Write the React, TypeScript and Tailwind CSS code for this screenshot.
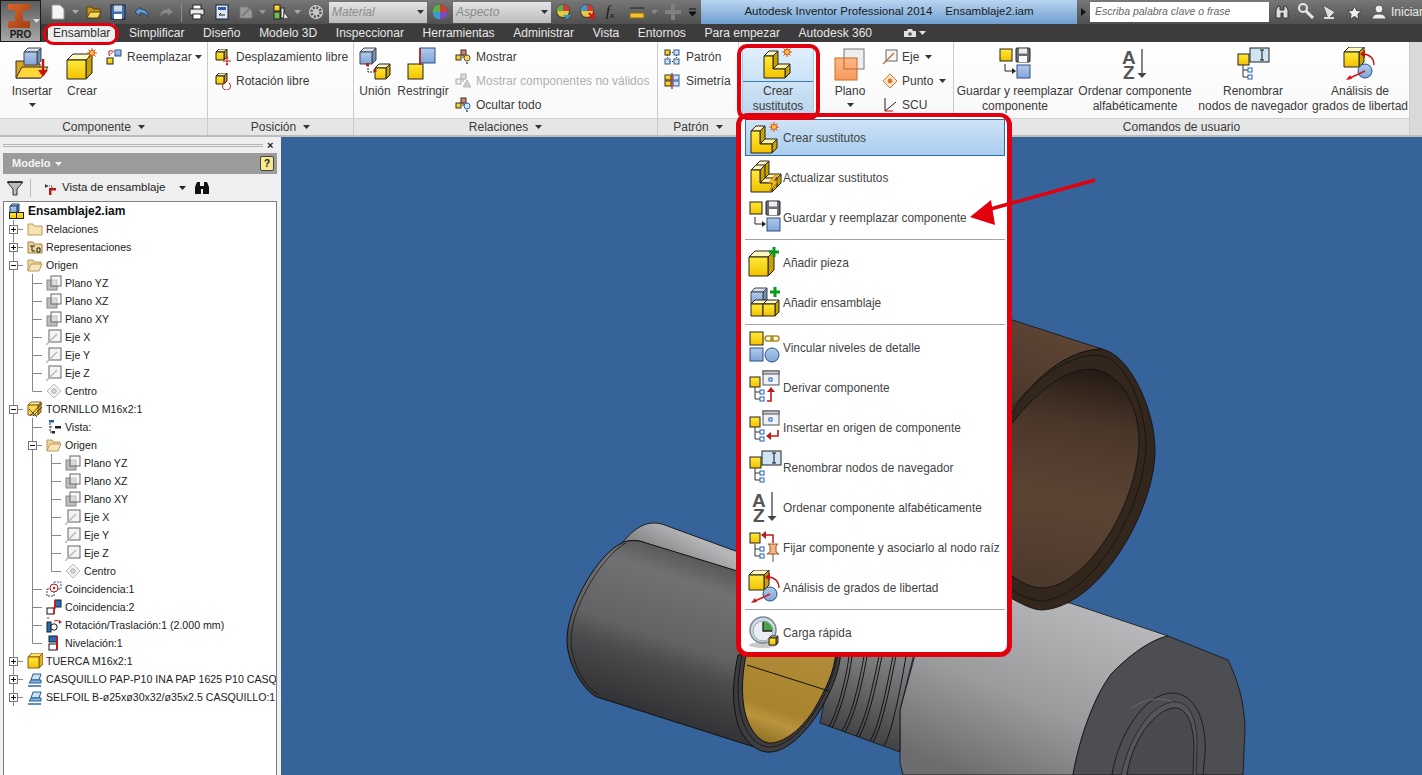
import type { ReactNode } from "react";

const Y = "url(#yel)";
const B = "url(#blu)";

type SvgProps = { size?: number; w?: number; h?: number; vb?: string; className?: string; children?: ReactNode };

function Svg({ size = 16, w, h, vb, className, children }: SvgProps) {
  const wd = w ?? size;
  const ht = h ?? size;
  return (
    <svg width={wd} height={ht} viewBox={vb ?? `0 0 ${wd} ${ht}`} className={"shrink-0 " + (className ?? "")}>
      {children}
    </svg>
  );
}

function Caret({ className, color = "#333" }: { className?: string; color?: string }) {
  return (
    <svg width="7" height="4" viewBox="0 0 7 4" className={"shrink-0 " + (className ?? "")}>
      <path d="M0 0h7L3.5 4z" fill={color} />
    </svg>
  );
}

// --- piezas de dibujo compartidas ---
function CubeG({ x, y, s, fill = Y, top = "#fff6c0", side = "#c9a200", line = "#222" }: { x: number; y: number; s: number; fill?: string; top?: string; side?: string; line?: string }) {
  const d = Math.round(s * 0.32);
  return (
    <g stroke={line} strokeWidth="1" strokeLinejoin="round">
      <polygon points={`${x},${y} ${x + d},${y - d} ${x + s + d},${y - d} ${x + s},${y}`} fill={top} />
      <polygon points={`${x + s},${y} ${x + s + d},${y - d} ${x + s + d},${y + s - d} ${x + s},${y + s}`} fill={side} />
      <rect x={x} y={y} width={s} height={s} fill={fill} />
    </g>
  );
}

function Spark({ x, y }: { x: number; y: number }) {
  return (
    <g stroke="#d8551a" strokeWidth="1">
      <path d={`M${x - 5} ${y}h10M${x} ${y - 5}v10M${x - 3.5} ${y - 3.5}l7 7M${x + 3.5} ${y - 3.5}l-7 7`} />
      <circle cx={x} cy={y} r="2.6" fill="#ffc23a" />
    </g>
  );
}

function Plus({ x, y }: { x: number; y: number }) {
  return <path d={`M${x - 5} ${y}h10M${x} ${y - 5}v10`} stroke="#0a9a1e" strokeWidth="3" />;
}

function LBlockG({ dx = 0, dy = 0 }: { dx?: number; dy?: number }) {
  return (
    <g transform={`translate(${dx} ${dy})`} stroke="#222" strokeWidth="1" strokeLinejoin="round">
      <polygon points="3,8 8,3 17,3 12,8" fill="#fff6c0" />
      <polygon points="12,8 17,3 17,16 12,21" fill="#c9a200" />
      <polygon points="12,21 17,16 29,16 24,21" fill="#fff0a0" />
      <polygon points="24,21 29,16 29,25 24,30" fill="#c9a200" />
      <path d="M3 8H12V21H24V30H3z" fill={Y} />
    </g>
  );
}

function YSq({ x, y, s = 12 }: { x: number; y: number; s?: number }) {
  return <rect x={x} y={y} width={s} height={s} fill={Y} stroke="#222" />;
}

function BSq({ x, y, s = 12 }: { x: number; y: number; s?: number }) {
  return <rect x={x} y={y} width={s} height={s} fill={B} stroke="#2a4f86" />;
}

function TreeG({ x, y }: { x: number; y: number }) {
  return (
    <g fill="#fff">
      <path d={`M${x} ${y}v12M${x} ${y + 5}h5M${x} ${y + 12}h5`} stroke="#333" fill="none" />
      <rect x={x + 5} y={y + 3} width="4" height="4" stroke="#1a5fb4" />
      <rect x={x + 5} y={y + 10} width="4" height="4" stroke="#1a5fb4" />
    </g>
  );
}

function WindowG({ x, y, children }: { x: number; y: number; children?: ReactNode }) {
  return (
    <g>
      <rect x={x} y={y} width="16" height="14" fill="#eef1f5" stroke="#555" />
      <rect x={x} y={y} width="16" height="3" fill="#c9ccd2" stroke="#555" />
      {children}
    </g>
  );
}

// --- iconos grandes ---
const IcoSustitutos = ({ className }: { className?: string }) => (
  <Svg size={34} className={className}>
    <LBlockG dy={2} />
    <Spark x={26} y={6} />
  </Svg>
);

const IcoActualizar = () => (
  <Svg size={34}>
    <LBlockG dx={4} dy={-2} />
    <LBlockG dy={2} />
    <path d="M28 14l-7 9h4l-4 9 9-11h-4l4-7z" fill="#f7c31f" stroke="#a8741a" strokeWidth=".8" />
  </Svg>
);

const IcoGuardar = () => (
  <Svg size={34}>
    <rect x="2" y="2" width="12" height="12" fill={Y} stroke="#222" />
    <rect x="18" y="1" width="14" height="14" rx="1" fill="#6b6f76" stroke="#222" />
    <rect x="21" y="1.5" width="8" height="5" fill="#eee" />
    <rect x="21" y="9" width="8" height="6" fill="#fff" />
    <path d="M7 17v7h7" stroke="#222" fill="none" />
    <path d="M14 21l4 3-4 3z" fill="#222" />
    <rect x="19" y="18" width="13" height="13" fill={B} stroke="#2a4f86" />
  </Svg>
);

const IcoPieza = () => (
  <Svg size={34}>
    <CubeG x={1} y={12} s={19} />
    <Plus x={26} y={7} />
  </Svg>
);

const IcoEnsamblaje = () => (
  <Svg size={34}>
    <CubeG x={3} y={7} s={12} fill={B} top="#d6e4f5" side="#6e8fbd" line="#444" />
    <CubeG x={3} y={19} s={12} />
    <CubeG x={15} y={19} s={12} />
    <Plus x={27} y={7} />
  </Svg>
);

const IcoVincular = () => (
  <Svg size={34}>
    <YSq x={2} y={2} s={13} />
    <BSq x={2} y={18} s={13} />
    <circle cx="24" cy="25" r="7" fill={B} stroke="#2a4f86" />
    <rect x="17" y="6" width="8" height="5" rx="2.5" fill="none" stroke="#b08a10" strokeWidth="1.5" />
    <rect x="23" y="6" width="8" height="5" rx="2.5" fill="none" stroke="#b08a10" strokeWidth="1.5" />
  </Svg>
);

const IcoDerivar = () => (
  <Svg size={34}>
    <YSq x={2} y={7} s={10} />
    <WindowG x={15} y={1}>
      <rect x="21" y="8" width="3" height="3" fill="none" stroke="#1a5fb4" />
    </WindowG>
    <TreeG x={7} y={17} />
    <path d="M19 31h4V21" stroke="#c01818" strokeWidth="1.6" fill="none" />
    <path d="M19 22l4-5 4 5z" fill="#c01818" />
  </Svg>
);

const IcoInsertar = () => (
  <Svg size={34}>
    <YSq x={2} y={7} s={10} />
    <WindowG x={15} y={1}>
      <rect x="21" y="8" width="3" height="3" fill="none" stroke="#1a5fb4" />
    </WindowG>
    <TreeG x={7} y={17} />
    <path d="M30 20v6h-9" stroke="#c01818" strokeWidth="1.6" fill="none" />
    <path d="M23 22l-5 4 5 4z" fill="#c01818" />
  </Svg>
);

const IcoRenombrar = () => (
  <Svg size={34}>
    <YSq x={2} y={7} s={11} />
    <rect x="14" y="1" width="19" height="14" fill="#cfe4f5" stroke="#222" />
    <path d="M24 3h4M26 3v10M24 13h4" stroke="#111" />
    <TreeG x={7} y={18} />
  </Svg>
);

const IcoOrdenar = () => (
  <Svg size={34} className="overflow-visible">
    <text x="4" y="17" fontSize="19" fontWeight="700" fill="#555" fontFamily="Liberation Sans, sans-serif">A</text>
    <text x="5" y="32" fontSize="19" fontWeight="700" fill="#555" fontFamily="Liberation Sans, sans-serif">Z</text>
    <path d="M24 2v25" stroke="#444" strokeWidth="1.3" />
    <path d="M19.500 26h9l-4.500 5z" fill="#444" />
  </Svg>
);

const IcoFijar = () => (
  <Svg size={34}>
    <YSq x={2} y={3} s={10} />
    <path d="M17 5h8v8" stroke="#c01818" strokeWidth="1.5" fill="none" />
    <path d="M18 1l-5 4 5 4z" fill="#c01818" />
    <TreeG x={7} y={14} />
    <path d="M20 14h10l-2 2v6l3 2H19l3-2v-6z" fill="#f6b480" stroke="#a4562a" />
    <path d="M25 24v8" stroke="#555" />
  </Svg>
);

const IcoAnalisis = () => (
  <Svg size={34}>
    <CubeG x={1} y={5} s={15} />
    <circle cx="22" cy="24" r="7" fill={B} stroke="#2a4f86" />
    <path d="M20 7c6 0 11 4 11 11" fill="none" stroke="#c01818" strokeWidth="1.4" />
    <path d="M22 3l-5 4 5 4z" fill="#c01818" />
    <path d="M22 24L7 31" stroke="#d01818" strokeWidth="1.5" />
    <path d="M3 33l4-5 2 4z" fill="#d01818" />
  </Svg>
);

const IcoCarga = () => (
  <Svg size={34}>
    <ellipse cx="15" cy="30" rx="14" ry="3" fill="#c8c8c8" />
    <circle cx="15" cy="15" r="13" fill="#cfdbe6" stroke="#7a8894" strokeWidth="1.5" />
    <circle cx="15" cy="16" r="10" fill="#e8eef3" stroke="#9aa7b2" />
    <path d="M15 16V6a10 10 0 0 1 10 10z" fill="#4aa24a" />
    <path d="M15 7v9h9" stroke="#222" strokeWidth="1.3" fill="none" />
    <CubeG x={21} y={23} s={7} />
  </Svg>
);

// --- iconos pequeños (16) ---
const IcoReemplazar = () => (
  <Svg size={16}>
    <YSq x={1} y={9} s={6} />
    <BSq x={9} y={1} s={6} />
    <path d="M3 7l5-5" stroke="#c01818" strokeDasharray="2 1" />
    <path d="M7 1h-4v4" stroke="#c01818" fill="none" transform="translate(0 1)" />
  </Svg>
);

const IcoDespl = () => (
  <Svg size={17} w={17} h={17}>
    <CubeG x={1} y={3} s={8} />
    <path d="M12 8v8M8 12h8" stroke="#c01818" />
    <path d="M10.5 9.5L12 7l1.5 2.5zM10.5 14.5L12 17l1.5-2.5z" fill="#c01818" />
  </Svg>
);

const IcoRot = () => (
  <Svg size={17}>
    <CubeG x={1} y={3} s={8} />
    <path d="M9 10a4 4 0 1 0 5 0" stroke="#c01818" fill="none" />
    <path d="M8 8l3 1-2 2z" fill="#c01818" />
  </Svg>
);

const IcoBulb = ({ fill, line = "#555", nodes = true, mute = false }: { fill: string; line?: string; nodes?: boolean; mute?: boolean }) => (
  <Svg size={16}>
    {nodes && (
      <g>
        <rect x="6" y="1" width="5" height="5" fill={mute ? "#ddd" : "#e57b5f"} stroke={mute ? "#aaa" : "#333"} />
        <rect x="1" y="6" width="5" height="5" fill={mute ? "#eee" : "#f7d21e"} stroke={mute ? "#aaa" : "#333"} />
        <path d="M8 6v3" stroke={mute ? "#aaa" : "#333"} />
      </g>
    )}
    {mute ? (
      <path d="M12 7l4 7H8z" fill="#ccc" stroke="#bbb" />
    ) : (
      <g>
        <circle cx="12" cy="9" r="3" fill={fill} stroke={line} />
        <path d="M11 13h2v2h-2z" fill="#777" />
      </g>
    )}
  </Svg>
);

const IcoPatron = () => (
  <Svg size={16}>
    <rect x="1" y="1" width="5" height="5" fill={Y} stroke="#333" />
    <rect x="10" y="1" width="5" height="5" fill="#cfe0f5" stroke="#2a5f9a" />
    <rect x="1" y="10" width="5" height="5" fill="#cfe0f5" stroke="#2a5f9a" />
    <rect x="10" y="10" width="5" height="5" fill="#cfe0f5" stroke="#2a5f9a" />
    <path d="M6 3.5h4M3.5 6v4M12.5 6v4M6 12.5h4" stroke="#333" strokeDasharray="1 1" />
  </Svg>
);

const IcoSimetria = () => (
  <Svg size={16}>
    <rect x="1" y="2" width="6" height="5" fill={Y} stroke="#333" />
    <rect x="1" y="8" width="6" height="5" fill={Y} stroke="#333" />
    <rect x="9" y="2" width="6" height="5" fill="#cfe0f5" stroke="#2a5f9a" />
    <rect x="9" y="8" width="6" height="5" fill="#cfe0f5" stroke="#2a5f9a" />
    <path d="M8 0v16" stroke="#c01818" strokeWidth="1.3" />
  </Svg>
);

const IcoEje = () => (
  <Svg size={16}>
    <rect x="4" y="1" width="11" height="11" fill="#f6f6f6" stroke="#666" />
    <path d="M1 15L12 4" stroke="#c8704a" strokeWidth="1.5" />
  </Svg>
);

const IcoPunto = () => (
  <Svg size={16}>
    <path d="M8 1l7 7-7 7-7-7z" fill="#fbe6c8" stroke="#d8782a" />
    <circle cx="8" cy="8" r="2.4" fill="#d8782a" />
  </Svg>
);

const IcoScu = () => (
  <Svg size={16}>
    <path d="M3 1v13L14 5" stroke="#222" fill="none" />
    <path d="M3 14h8" stroke="#c01818" />
  </Svg>
);

const IcoPlano = () => (
  <Svg size={34}>
    <rect x="11" y="2" width="20" height="20" fill="#eeeeee" stroke="#777" />
    <rect x="2" y="11" width="22" height="22" fill="url(#ora)" stroke="#d06a20" />
    <path d="M11 11v11h13" stroke="#c8622a" fill="none" />
  </Svg>
);

const IcoInsertarBig = () => (
  <Svg w={36} h={34}>
    <path d="M2 14h8l2 3h14v14H2z" fill="#d9a520" stroke="#333" />
    <CubeG x={10} y={5} s={13} fill={B} top="#d6e4f5" side="#6e8fbd" line="#444" />
    <path d="M2 31l6-11h26l-7 11z" fill="#ffd63a" stroke="#333" />
    <path d="M29 12v13" stroke="#c01818" strokeWidth="2.5" />
    <path d="M24 23h10l-5 7z" fill="#c01818" />
  </Svg>
);

const IcoCrear = () => (
  <Svg size={34}>
    <CubeG x={2} y={13} s={19} />
    <Spark x={27} y={6} />
  </Svg>
);

const IcoUnion = () => (
  <Svg w={34} h={34}>
    <CubeG x={2} y={5} s={12} fill={B} top="#d6e4f5" side="#6e8fbd" line="#444" />
    <path d="M10 18v7h6" stroke="#222" fill="none" strokeDasharray="2 1" />
    <rect x="8" y="16" width="3" height="3" fill="#c01818" />
    <CubeG x={17} y={21} s={11} />
    <rect x="15.5" y="22" width="3" height="3" fill="#c01818" />
  </Svg>
);

const IcoRestringir = () => (
  <Svg size={34}>
    <rect x="14" y="1" width="15" height="15" fill={B} stroke="#2a4f86" />
    <rect x="2" y="17" width="15" height="15" fill={Y} stroke="#222" />
    <path d="M14 1v17" stroke="#c01818" strokeWidth="1.6" />
    <path d="M14 16v1" stroke="#c01818" />
  </Svg>
);

// --- iconos del árbol ---
const TFolder = () => (
  <Svg size={16}>
    <path d="M1 14V3h5l1 2h8v9z" fill="#f6e2b0" stroke="#b89a5a" />
  </Svg>
);
const TFolderRep = () => (
  <Svg size={16}>
    <path d="M1 14V3h5l1 2h8v9z" fill="#f0d89c" stroke="#a08040" />
    <path d="M3 7h5M5 7v5h3M10 9h3v4h-3z" stroke="#222" fill="none" />
  </Svg>
);
const TFolderOpen = () => (
  <Svg size={16}>
    <path d="M1 14V3h5l1 2h7v2" fill="#f0d89c" stroke="#b89a5a" />
    <path d="M1 14l3-7h11l-3 7z" fill="#f8e6b8" stroke="#b89a5a" />
  </Svg>
);
const TPlane = () => (
  <Svg size={16}>
    <rect x="1" y="5" width="10" height="10" fill="#bdbdbd" stroke="#888" />
    <rect x="5" y="1" width="10" height="10" fill="#f2f2f2" fillOpacity=".55" stroke="#666" />
  </Svg>
);
const TAxis = () => (
  <Svg size={16}>
    <rect x="3" y="1" width="12" height="12" fill="#f4f4f4" stroke="#666" />
    <path d="M0 16L11 5" stroke="#b8b8b8" strokeWidth="1.4" />
  </Svg>
);
const TCenter = () => (
  <Svg size={16}>
    <path d="M8 1l7 7-7 7-7-7z" fill="#f2f2f2" stroke="#bbb" />
    <circle cx="8" cy="8" r="2.2" fill="#ddd" stroke="#aaa" />
  </Svg>
);
const TAsm = () => (
  <Svg size={16}>
    <CubeG x={1} y={3} s={7} fill={B} top="#d6e4f5" side="#6e8fbd" line="#1d3f70" />
    <rect x="0.5" y="9.5" width="7" height="6" fill={Y} stroke="#222" />
    <rect x="7.5" y="9.5" width="7" height="6" fill={Y} stroke="#222" />
  </Svg>
);
const TBolt = () => (
  <Svg size={16}>
    <CubeG x={1} y={4} s={10} fill="#ffd84a" line="#8a5a10" />
    <path d="M3 15L15 2M6 15L15 6M2 8l8 8" stroke="#333" fill="none" strokeWidth=".9" />
  </Svg>
);
const TVista = () => (
  <Svg size={16}>
    <rect x="3" y="1" width="5" height="2.5" fill="#1d5fa8" />
    <path d="M4 4v9h2M4 8h3" stroke="#222" strokeDasharray="2 1" fill="none" />
    <rect x="9" y="7" width="6" height="2.5" fill="#222" />
    <rect x="6" y="12" width="3" height="2.5" fill="#222" />
  </Svg>
);
const TCoin1 = () => (
  <Svg size={16}>
    <rect x="8" y="1" width="7" height="7" fill="none" stroke="#2a6ab0" strokeDasharray="2 1" />
    <rect x="1" y="8" width="7" height="7" fill="none" stroke="#444" strokeDasharray="2 1" />
    <circle cx="8" cy="7" r="4" fill="#fff" stroke="#c01818" />
    <circle cx="8" cy="7" r="1.2" fill="#c01818" />
  </Svg>
);
const TCoin2 = () => (
  <Svg size={16}>
    <rect x="9" y="1" width="6" height="7" fill="#2a6ab0" stroke="#123" />
    <rect x="1" y="9" width="7" height="6" fill="#fff" stroke="#111" />
    <path d="M9 1v8H8v6" stroke="#d01818" strokeWidth="1.6" fill="none" />
  </Svg>
);
const TRot = () => (
  <Svg size={16}>
    <path d="M2 0v3" stroke="#d01818" strokeDasharray="2 1" />
    <rect x="1" y="5" width="4" height="10" fill="#2a6ab0" stroke="#123" />
    <circle cx="8" cy="10" r="3.2" fill="#fff" stroke="#111" />
    <path d="M8 4a5 5 0 0 1 6 1" stroke="#d01818" fill="none" />
    <path d="M13 3l3 2-3 2z" fill="#d01818" />
  </Svg>
);
const TNivel = () => (
  <Svg size={16}>
    <rect x="3" y="1" width="8" height="6" fill="#2a6ab0" stroke="#123" />
    <rect x="3" y="9" width="8" height="6" fill="#fff" stroke="#111" />
    <path d="M11 1v14" stroke="#c01818" strokeWidth="2" />
  </Svg>
);
const TNut = () => (
  <Svg size={16}>
    <CubeG x={1} y={4} s={11} fill={Y} top="#ffe27a" side="#e0b020" line="#8a5a10" />
  </Svg>
);
const TImported = () => (
  <Svg size={16}>
    <path d="M4 9l2-6h8l-2 6z" fill="#cfe0f5" stroke="#1d5f9a" />
    <path d="M2 12l2-3h10v3z" fill="#8fb4dc" stroke="#1d5f9a" />
    <path d="M1 15h13" stroke="#1d5f9a" strokeWidth="1.4" />
  </Svg>
);

type Guide = "|" | "T" | "L" | "+" | "-";

function GuideCell({ kind }: { kind: Guide }) {
  // celda de 19px, línea vertical en x=9.5
  return (
    <svg width="19" height="18" viewBox="0 0 19 18" className="shrink-0" fill="none">
      {kind === "|" && <path d="M9.5 0v18" stroke="#888" />}
      {kind === "T" && <path d="M9.5 0v18M9.5 9.5H21" stroke="#888" />}
      {kind === "L" && <path d="M9.5 0v9.5H21" stroke="#888" />}
      {(kind === "+" || kind === "-") && (
        <g>
          <path d="M9.5 0v18M9.5 9.5H21" stroke="#888" />
          <rect x="5.5" y="5.5" width="8" height="8" fill="#fff" stroke="#777" />
          <path d="M7 9.5h5" stroke="#111" />
          {kind === "+" && <path d="M9.5 7v5" stroke="#111" />}
        </g>
      )}
    </svg>
  );
}

const plano3 = (g: string) =>
  [
    [g, <TPlane />, "Plano YZ"],
    [g, <TPlane />, "Plano XZ"],
    [g, <TPlane />, "Plano XY"],
    [g, <TAxis />, "Eje X"],
    [g, <TAxis />, "Eje Y"],
    [g, <TAxis />, "Eje Z"],
  ] as [string, ReactNode, string][];

const treeRows: [string, ReactNode, string][] = [
  ["+", <TFolder />, "Relaciones"],
  ["+", <TFolderRep />, "Representaciones"],
  ["-", <TFolderOpen />, "Origen"],
  ...plano3("|T"),
  ["|L", <TCenter />, "Centro"],
  ["-", <TBolt />, "TORNILLO M16x2:1"],
  ["|T", <TVista />, "Vista:"],
  ["|-", <TFolderOpen />, "Origen"],
  ...plano3("||T"),
  ["||L", <TCenter />, "Centro"],
  ["|T", <TCoin1 />, "Coincidencia:1"],
  ["|T", <TCoin2 />, "Coincidencia:2"],
  ["|T", <TRot />, "Rotación/Traslación:1 (2.000 mm)"],
  ["|L", <TNivel />, "Nivelación:1"],
  ["+", <TNut />, "TUERCA M16x2:1"],
  ["+", <TImported />, "CASQUILLO PAP-P10 INA PAP 1625 P10 CASQUILLO:1"],
  ["+", <TImported />, "SELFOIL B-ø25xø30x32/ø35x2.5 CASQUILLO:1"],
];

function TreeRow({ guides, icon, label }: { guides: string; icon: ReactNode; label: string }) {
  return (
    <div className="flex h-[18px] items-center">
      {guides.split("").map((g, i) => (
        <GuideCell key={i} kind={g as Guide} />
      ))}
      <div className="flex w-[23px] shrink-0 justify-start pl-[4px]">{icon}</div>
      <span className="whitespace-nowrap pt-[2px] text-[10.6px] text-[#222]">{label}</span>
    </div>
  );
}

function Browser() {
  return (
    <div className="flex w-[281px] shrink-0 flex-col bg-[#efefef]">
      <div className="flex h-4 items-center px-[3px]">
        <div className="h-[3px] w-[260px] border-y border-[#b5b5b5]" />
        <span className="ml-[4px] text-[11px] font-bold leading-none text-[#222]">×</span>
      </div>
      <div className="mx-[3px] flex h-[21px] w-[274px] items-center justify-between bg-[#9b9b9b] pl-[9px] pr-[3px]">
        <span className="flex items-center gap-[4px] text-[11px] font-bold text-[#f4f4f4]">
          Modelo
          <Caret color="#f4f4f4" />
        </span>
        <div className="flex h-[15px] w-[14px] items-center justify-center rounded-[2px] border border-[#444] bg-[#f7e98e] text-[10px] font-bold text-[#222]">?</div>
      </div>
      <div className="flex h-[27px] items-center pl-[7px]">
        <Svg size={16}>
          <path d="M0 2h16l-6 7v6H6V9z" fill="#bbb" stroke="#333" />
          <path d="M1 2h14" stroke="#222" strokeWidth="1.6" />
        </Svg>
        <div className="ml-[7px] h-[18px] w-px bg-[#bdbdbd]" />
        <Svg size={14} className="ml-[13px]">
          <path d="M1 3l3 2-3 2z" fill="#333" />
          <path d="M3 5h5v3" stroke="#333" fill="none" strokeDasharray="1 1" />
          <rect x="5" y="7" width="7" height="2.5" fill="#c01818" />
          <rect x="5" y="8" width="2.5" height="6" fill="#c01818" />
        </Svg>
        <span className="ml-[4px] whitespace-nowrap text-[11.5px] text-[#222]">Vista de ensamblaje</span>
        <Caret className="ml-[14px]" color="#222" />
        <Svg w={16} h={15} className="ml-[8px]">
          <path d="M1 14V7l2-5h3v4h4V2h3l2 5v7h-6V9H7v5z" fill="#111" />
        </Svg>
      </div>
      <div className="mx-[3px] flex w-[274px] flex-1 flex-col overflow-hidden border border-b-0 border-[#808080] bg-white">
        <div className="flex h-[18px] items-center pl-[5px]">
          <TAsm />
          <span className="ml-[3px] whitespace-nowrap text-xs font-bold text-[#111]">Ensamblaje2.iam</span>
        </div>
        {treeRows.map(([g, ic, lab], i) => (
          <TreeRow key={i} guides={g} icon={ic} label={lab} />
        ))}
      </div>
    </div>
  );
}

function SmallRow({ icon, label, caret, muted, gap = "ml-[5px]", caretGap = "ml-[6px]" }: { icon: ReactNode; label: string; caret?: boolean; muted?: boolean; gap?: string; caretGap?: string }) {
  return (
    <div className="flex h-6 items-center">
      <div className="flex w-4 shrink-0 justify-center">{icon}</div>
      <span className={"whitespace-nowrap text-xs " + gap + (muted ? " text-[#b0b0b0]" : " text-[#3a3a3a]")}>{label}</span>
      {caret && <Caret className={caretGap} />}
    </div>
  );
}

function BigButton({ icon, lines, caret, width }: { icon: ReactNode; lines: string[]; caret?: boolean; width: string }) {
  return (
    <div className={"flex shrink-0 flex-col items-center " + width}>
      <div className="flex h-[42px] items-center justify-center pt-[2px]">{icon}</div>
      {lines.map((l) => (
        <span key={l} className="whitespace-nowrap text-xs leading-[15px] text-[#3a3a3a]">{l}</span>
      ))}
      {caret && <Caret className="mt-[4px]" />}
    </div>
  );
}

function Panel({ title, width, children }: { title?: ReactNode; width: string; children: ReactNode }) {
  return (
    <div className={"flex shrink-0 flex-col border-r border-[#cccccc] " + width}>
      <div className="flex h-[76px] overflow-hidden">{children}</div>
      <div className="flex h-[17px] items-center justify-center gap-[7px] border-t border-[#d2d2d2] bg-[#e6e6e6] text-xs text-[#3a3a3a]">
        {title}
      </div>
    </div>
  );
}

function PanelTitle({ text }: { text: string }) {
  return (
    <>
      <span>{text}</span>
      <Caret />
    </>
  );
}

function Ribbon() {
  return (
    <div className="flex h-[95px] border-b-2 border-[#bdbdbd] bg-gradient-to-b from-white to-[#f7f7f7]">
      <Panel width="w-[208px]" title={<PanelTitle text="Componente" />}>
        <div className="flex pl-[10px]">
          <BigButton width="w-[44px]" icon={<IcoInsertarBig />} lines={["Insertar"]} caret />
          <BigButton width="w-[44px] ml-[6px]" icon={<IcoCrear />} lines={["Crear"]} />
          <div className="ml-[2px] pt-[3px]">
            <SmallRow icon={<IcoReemplazar />} label="Reemplazar" caret caretGap="ml-[3px]" />
          </div>
        </div>
      </Panel>
      <Panel width="w-[146px]" title={<PanelTitle text="Posición" />}>
        <div className="pl-[7px] pt-[3px]">
          <SmallRow icon={<IcoDespl />} label="Desplazamiento libre" />
          <SmallRow icon={<IcoRot />} label="Rotación libre" />
        </div>
      </Panel>
      <Panel width="w-[304px]" title={<PanelTitle text="Relaciones" />}>
        <div className="flex pl-px">
          <BigButton width="w-[40px]" icon={<IcoUnion />} lines={["Unión"]} />
          <BigButton width="w-[52px] ml-[2px]" icon={<IcoRestringir />} lines={["Restringir"]} />
          <div className="ml-[6px] pt-[3px]">
            <SmallRow icon={<IcoBulb fill="#ffd84a" />} label="Mostrar" />
            <SmallRow icon={<IcoBulb fill="#ccc" mute />} label="Mostrar componentes no válidos" muted />
            <SmallRow icon={<IcoBulb fill="#cfe6fa" line="#2a6ab0" />} label="Ocultar todo" />
          </div>
        </div>
      </Panel>
      <Panel width="w-[81px]" title={<PanelTitle text="Patrón" />}>
        <div className="pl-[6px] pt-[3px]">
          <SmallRow icon={<IcoPatron />} label="Patrón" gap="ml-[6px]" />
          <SmallRow icon={<IcoSimetria />} label="Simetría" gap="ml-[6px]" />
        </div>
      </Panel>
      <Panel width="w-[215px]">
        <div className="flex pl-[3px]">
          <div className="mt-[3px] flex h-[70px] w-[72px] shrink-0 flex-col border-x border-[#a8cbe6]">
            <div className="flex h-[37px] items-center justify-center border-b border-[#3c7cb0] bg-gradient-to-b from-[#e4f1fb] to-[#c9e2f6]">
              <IcoSustitutos />
            </div>
            <div className="flex flex-1 flex-col items-center bg-gradient-to-b from-[#cfe3f4] to-[#b9d6ee] pt-[2px]">
              <span className="text-xs leading-[15px] text-[#3a3a3a]">Crear</span>
              <span className="text-xs leading-[15px] text-[#3a3a3a]">sustitutos</span>
            </div>
          </div>
          <BigButton width="w-[48px] ml-[12px]" icon={<IcoPlano />} lines={["Plano"]} caret />
          <div className="ml-[8px] pt-[3px]">
            <SmallRow icon={<IcoEje />} label="Eje" gap="ml-[4px]" caret />
            <SmallRow icon={<IcoPunto />} label="Punto" gap="ml-[4px]" caret />
            <SmallRow icon={<IcoScu />} label="SCU" gap="ml-[4px]" />
          </div>
        </div>
      </Panel>
      <Panel width="w-[456px]" title="Comandos de usuario">
        <div className="flex pl-px">
          <BigButton width="w-[120px]" icon={<IcoGuardar />} lines={["Guardar y reemplazar", "componente"]} />
          <BigButton width="w-[120px]" icon={<IcoOrdenar />} lines={["Ordenar componente", "alfabéticamente"]} />
          <BigButton width="w-[116px]" icon={<IcoRenombrar />} lines={["Renombrar", "nodos de navegador"]} />
          <BigButton width="w-[98px]" icon={<IcoAnalisis />} lines={["Análisis de", "grados de libertad"]} />
        </div>
      </Panel>
      <div className="flex-1 bg-[#d9d9d9]" />
    </div>
  );
}

function Combo({ text, className }: { text: string; className?: string }) {
  return (
    <div className={"flex h-[21px] w-[98px] shrink-0 items-center justify-between bg-gradient-to-b from-[#e4e4e4] to-[#bcbcbc] pl-[3px] pr-[3px] " + (className ?? "")}>
      <span className="text-xs italic text-[#8a8a8a]">{text}</span>
      <Caret color="#333" />
    </div>
  );
}

function TitleBar() {
  return (
    <div className="flex h-[24px] items-center bg-gradient-to-b from-[#777777] to-[#505050]">
      <Svg size={16} className="ml-[9px]">
        <path d="M2 1h8l4 4v10H2z" fill="#f5f5f5" stroke="#999" />
      </Svg>
      <Caret className="ml-[6px]" color="#aaa" />
      <Svg size={16} className="ml-[7px]">
        <path d="M1 14V3h5l1 2h7v9z" fill="#c9961c" stroke="#5b4208" />
        <path d="M1 14l3-6h11l-3 6z" fill="#f4d860" stroke="#5b4208" />
      </Svg>
      <Svg size={16} className="ml-[8px]">
        <rect x="1" y="1" width="14" height="14" fill="#3f72ad" stroke="#12233a" />
        <rect x="4" y="1.5" width="8" height="6" fill="#cfd8e4" />
        <rect x="4" y="10" width="8" height="5" fill="#fff" />
      </Svg>
      <Svg size={16} className="ml-[8px]">
        <path d="M6 3L1 8l5 4V9c4 0 6 1 8 4 0-5-3-8-8-8z" fill="#6a9bd0" stroke="#20456f" />
      </Svg>
      <Svg size={16} className="ml-[8px]">
        <path d="M10 3l5 5-5 4V9c-4 0-6 1-8 4 0-5 3-8 8-8z" fill="#8c8c8c" stroke="#6a6a6a" />
      </Svg>
      <div className="ml-[7px] h-[19px] w-px bg-[#8a8a8a]" />
      <Svg size={16} className="ml-[7px]">
        <rect x="4" y="1" width="8" height="5" fill="#fff" stroke="#222" />
        <rect x="1" y="5" width="14" height="6" rx="1" fill="#e8e8e8" stroke="#222" />
        <rect x="4" y="10" width="8" height="5" fill="#fff" stroke="#222" />
      </Svg>
      <Svg size={16} className="ml-[9px]">
        <rect x="2" y="1" width="12" height="14" fill="#dfe7f2" stroke="#12233a" />
        <rect x="4" y="3" width="8" height="3" fill="#2a5fa0" />
        <path d="M5 11h6M5 11l2-2" stroke="#222" />
      </Svg>
      <Svg size={16} className="ml-[8px]">
        <path d="M2 3h8l4 4v7H2z" fill="#9a9a9a" stroke="#7a7a7a" />
        <path d="M4 12L12 4" stroke="#7a7a7a" strokeWidth="2" />
      </Svg>
      <Caret className="ml-[5px]" color="#999" />
      <Svg size={16} className="ml-[7px]">
        <rect x="1" y="1" width="6" height="6" fill={Y} stroke="#222" />
        <rect x="1" y="8" width="6" height="7" fill="#6cc04a" stroke="#222" />
        <rect x="8" y="4" width="3" height="10" fill="#eee" stroke="#222" />
        <path d="M11 8v8l2-2 3 1z" fill="#fff" stroke="#222" strokeWidth=".7" />
      </Svg>
      <Caret className="ml-[5px]" color="#aaa" />
      <Svg size={16} className="ml-[7px]">
        <circle cx="8" cy="8" r="7.5" fill="#c8c8c8" stroke="#666" />
        <circle cx="8" cy="8" r="4.5" fill="none" stroke="#555" strokeWidth="2.5" strokeDasharray="2 1.5" />
      </Svg>
      <Combo text="Material" className="ml-[5px]" />
      <Svg size={16} className="ml-[5px]">
        <circle cx="8" cy="8" r="7.5" fill="#e8c838" stroke="#555" />
        <path d="M8 8V.5A7.5 7.5 0 0 1 15.5 8z" fill="#d03a3a" />
        <path d="M8 8h7.5A7.5 7.5 0 0 1 8 15.5z" fill="#7a4ac0" />
        <path d="M8 8v7.5A7.5 7.5 0 0 1 .5 8z" fill="#3a9ad0" />
        <path d="M8 8H.5A7.5 7.5 0 0 1 8 .5z" fill="#5cb04a" />
      </Svg>
      <Combo text="Aspecto" className="ml-[5px]" />
      <Svg size={16} className="ml-[5px]">
        <circle cx="7" cy="7" r="6.5" fill="#e8c838" stroke="#333" />
        <path d="M7 7V.5A6.5 6.5 0 0 1 13.5 7z" fill="#d03a3a" />
        <path d="M7 7H.5A6.5 6.5 0 0 1 7 .5z" fill="#5cb04a" />
        <path d="M7 11h8l-4 4z" fill="#2a9ad8" />
      </Svg>
      <Svg size={16} className="ml-[8px]">
        <circle cx="7" cy="7" r="6.5" fill="#e8c838" stroke="#333" />
        <path d="M7 7V.5A6.5 6.5 0 0 1 13.5 7z" fill="#d03a3a" />
        <path d="M7 7H.5A6.5 6.5 0 0 1 7 .5z" fill="#3a9ad0" />
        <path d="M9 9l6 6M15 9l-6 6" stroke="#d01818" strokeWidth="2.2" />
      </Svg>
      <span className="ml-[10px] w-4 font-['Liberation_Serif',serif] text-sm italic text-[#111]">
        f<sub className="text-[9px]">x</sub>
      </span>
      <Svg size={16} className="ml-[7px]">
        <path d="M1 4h14" stroke="#222" />
        <rect x="1" y="9" width="14" height="5" fill="#f0c030" stroke="#8a6a10" />
      </Svg>
      <Caret className="ml-[6px]" color="#888" />
      <Svg size={16} className="ml-[7px]">
        <path d="M0 8h16M8 0v16" stroke="#808080" strokeWidth="4" />
      </Svg>
      <Svg size={8} className="ml-[8px]">
        <path d="M0 1h7M0 4h7l-3.5 4z" stroke="#111" fill="#111" />
      </Svg>
      <div className="ml-[4px] flex h-full w-[376px] items-center justify-center gap-[13px] bg-gradient-to-b from-[#b9d5f0] to-[#6f9fd0] text-[11.5px] text-[#1a1a1a]">
        <span>Autodesk Inventor Professional 2014</span>
        <span>Ensamblaje2.iam</span>
      </div>
      <div className="flex h-full flex-1 items-center overflow-hidden">
        <Svg w={5} h={8} className="ml-[4px]">
          <path d="M0 0l5 4-5 4z" fill="#111" />
        </Svg>
        <div className="ml-[4px] flex h-[20px] w-[179px] shrink-0 items-center bg-white pl-[5px] text-[10.5px] italic text-[#666]">
          Escriba palabra clave o frase
        </div>
        <Svg size={16} className="ml-[5px]">
          <path d="M2 14V6l2-4h2v4h4V2h2l2 4v8h-5V9H7v5z" fill="#ddd" stroke="#333" />
        </Svg>
        <Svg size={18} className="ml-[7px]">
          <circle cx="6" cy="5" r="4" fill="none" stroke="#e8e8e8" strokeWidth="2" />
          <path d="M9 8l7 7" stroke="#e8e8e8" strokeWidth="3" />
        </Svg>
        <Svg size={18} className="ml-[5px]">
          <path d="M3 2l12 7-7 7z" fill="#e0e0e0" stroke="#555" />
          <path d="M4 15h10" stroke="#ddd" strokeWidth="2" />
        </Svg>
        <Svg size={15} className="ml-[9px]">
          <path d="M7.5 1l2 4.5 5 .5-3.700 3.200 1.100 5-4.400-2.700-4.400 2.700 1.100-5L.5 6l5-.5z" fill="#f0f0f0" stroke="#444" />
        </Svg>
        <Svg size={16} className="ml-[9px]">
          <circle cx="8" cy="5" r="4" fill="#eee" stroke="#555" />
          <path d="M1 15c1-4 3-5 7-5s6 1 7 5z" fill="#eee" stroke="#555" />
        </Svg>
        <span className="ml-[4px] whitespace-nowrap text-xs text-[#e8e8e8]">Iniciar</span>
      </div>
    </div>
  );
}

const tabs = ["Simplificar", "Diseño", "Modelo 3D", "Inspeccionar", "Herramientas", "Administrar", "Vista", "Entornos", "Para empezar", "Autodesk 360"];

function Tabs() {
  return (
    <div className="flex h-[18px] items-center gap-[18.7px] bg-[#3c3c3c] pl-[12px] text-xs text-[#e8e8e8]">
      <span className="-mx-[5px] flex h-full items-center rounded-t-[3px] bg-[#eeeeee] px-[5px] text-[#333]">Ensamblar</span>
      {tabs.map((t) => (
        <span key={t} className="whitespace-nowrap">{t}</span>
      ))}
      <span className="ml-[13px] flex items-center gap-[3px]">
        <Svg w={12} h={8}>
          <path d="M0 2h3l1-2h4l1 2h3v6H0z" fill="#e0e0e0" />
          <circle cx="6" cy="5" r="1.8" fill="#555" />
        </Svg>
        <Caret color="#e0e0e0" />
      </span>
    </div>
  );
}

function Logo() {
  return (
    <div className="flex h-[42px] w-[41px] shrink-0 flex-col items-center border border-[#1c1c1c] bg-gradient-to-b from-[#5d5d5d] to-[#a8a8a8]">
      <Svg w={39} h={29}>
        <path d="M7 3h22v6h-7v11h7v7H7v-7h7V9H7z" fill="url(#logo)" />
        <path d="M32 18h7l-3.500 4z" fill="#ddd" />
      </Svg>
      <span className="text-[10px] font-bold leading-[10px] text-[#1d1d1d]">PRO</span>
    </div>
  );
}

const menuGroups: [ReactNode, string][][] = [
  [
    [<IcoSustitutos />, "Crear sustitutos"],
    [<IcoActualizar />, "Actualizar sustitutos"],
    [<IcoGuardar />, "Guardar y reemplazar componente"],
  ],
  [
    [<IcoPieza />, "Añadir pieza"],
    [<IcoEnsamblaje />, "Añadir ensamblaje"],
  ],
  [
    [<IcoVincular />, "Vincular niveles de detalle"],
    [<IcoDerivar />, "Derivar componente"],
    [<IcoInsertar />, "Insertar en origen de componente"],
    [<IcoRenombrar />, "Renombrar nodos de navegador"],
    [<IcoOrdenar />, "Ordenar componente alfabéticamente"],
    [<IcoFijar />, "Fijar componente y asociarlo al nodo raíz"],
    [<IcoAnalisis />, "Análisis de grados de libertad"],
  ],
  [[<IcoCarga />, "Carga rápida"]],
];

function Menu() {
  return (
    <div className="absolute left-[736px] top-[113px] w-[276px] rounded-[12px] border-[5px] border-t-[4px] border-[#e2000f] bg-white pl-[4px] pr-[2px]">
      {menuGroups.map((group, gi) => (
        <div key={gi}>
          {gi > 0 && (
            <div className="flex h-[5px] items-center">
              <div className="h-px w-full bg-[#a4a4a4]" />
            </div>
          )}
          {group.map(([icon, label]) => {
            const active = label === "Crear sustitutos";
            return (
              <div
                key={label}
                className={
                  active
                    ? "mb-px mt-[2px] flex h-[37px] items-center border border-[#2f6ea5] bg-gradient-to-b from-[#cfe3f6] to-[#a9cdee] pl-[2px]"
                    : "flex h-10 items-center pl-[3px]"
                }
              >
                {icon}
                <span className="whitespace-nowrap pl-[1px] pt-[3px] text-[11.85px] text-[#444]">{label}</span>
              </div>
            );
          })}
        </div>
      ))}
    </div>
  );
}

function Model() {
  // dibujo del ensamblaje 3D, en coordenadas de pantalla
  return (
    <svg viewBox="281 137 1141 638" className="h-full w-full" strokeLinejoin="round">
      <defs>
        <linearGradient id="sleeve" gradientUnits="userSpaceOnUse" x1="645" y1="540" x2="590" y2="705">
          <stop offset="0" stopColor="#58585a" />
          <stop offset=".15" stopColor="#717173" />
          <stop offset=".5" stopColor="#636365" />
          <stop offset=".65" stopColor="#4a4a4c" />
          <stop offset="1" stopColor="#2e2e30" />
        </linearGradient>
        <linearGradient id="back" gradientUnits="userSpaceOnUse" x1="665" y1="520" x2="640" y2="565">
          <stop offset="0" stopColor="#b6b6b8" />
          <stop offset="1" stopColor="#6c6c6e" />
        </linearGradient>
        <linearGradient id="gold" gradientUnits="userSpaceOnUse" x1="800" y1="660" x2="770" y2="745">
          <stop offset="0" stopColor="#b08a36" />
          <stop offset=".6" stopColor="#a8842e" />
          <stop offset=".75" stopColor="#b9943c" />
          <stop offset="1" stopColor="#8f6f24" />
        </linearGradient>
        <linearGradient id="thread" gradientUnits="userSpaceOnUse" x1="890" y1="650" x2="860" y2="745">
          <stop offset="0" stopColor="#87878a" />
          <stop offset="1" stopColor="#3e3e40" />
        </linearGradient>
        <linearGradient id="big" gradientUnits="userSpaceOnUse" x1="1080" y1="600" x2="1000" y2="790">
          <stop offset="0" stopColor="#b8b8ba" />
          <stop offset=".55" stopColor="#9b9b9e" />
          <stop offset="1" stopColor="#6d6d70" />
        </linearGradient>
        <linearGradient id="bore" gradientUnits="userSpaceOnUse" x1="1090" y1="368" x2="1050" y2="590">
          <stop offset="0" stopColor="#241a14" />
          <stop offset=".25" stopColor="#4a3629" />
          <stop offset=".6" stopColor="#5c4434" />
          <stop offset="1" stopColor="#4c392b" />
        </linearGradient>
        <linearGradient id="brownBody" gradientUnits="userSpaceOnUse" x1="1060" y1="330" x2="1010" y2="430">
          <stop offset="0" stopColor="#5e4535" />
          <stop offset="1" stopColor="#463428" />
        </linearGradient>
      </defs>

      {/* cilindro grande */}
      <path d="M1070,603 L1168,636 C1150,640 1130,655 1112,673 C1095,695 1080,735 1073,775 L903,775 L900,763 L900,710 L915,655 L930,590 Z" fill="url(#big)" stroke="#111" strokeWidth=".8" />
      <path d="M1168,636 L1228,660 C1238,680 1245,705 1245,730 L1243,775 L1073,775 C1080,735 1095,695 1112,673 C1130,655 1150,640 1168,636 Z" fill="#4d4e52" stroke="#111" strokeWidth=".8" />
      <path d="M1112,775 C1118,735 1145,693 1172,693 C1195,693 1207,720 1205,755 L1203,775" fill="none" stroke="#111" strokeWidth=".8" />
      <path d="M1121,775 C1128,745 1145,707 1172,702 C1190,700 1198,720 1197,750 L1196,775" fill="#555659" stroke="#222" strokeWidth=".8" />
      <path d="M1127,775 C1130,750 1148,714 1172,708 C1186,706 1194,722 1194,750 L1193,775 Z" fill="#4a4b4f" stroke="#111" strokeWidth=".8" />
      <path d="M1132,708 C1142,700 1160,696 1172,702" fill="none" stroke="#77777a" strokeWidth=".7" />

      {/* rosca */}
      <path d="M835,650 L915,650 L900,710 L900,752 L820,723 Z" fill="url(#thread)" stroke="#111" strokeWidth=".8" />
      <g fill="none" stroke="#111" strokeWidth="1">
        <path d="M849,656 C846,680 838,710 829,727" />
        <path d="M852,656 C849,680 841,710 832,728" />
        <path d="M864,656 C860,680 852,715 842,731" />
        <path d="M867,656 C863,680 855,715 845,732" />
        <path d="M879,656 C874,680 866,720 856,736" />
        <path d="M882,656 C877,680 869,720 859,737" />
        <path d="M893,656 C888,680 880,725 870,741" />
        <path d="M896,656 C891,680 883,725 873,742" />
        <path d="M906,656 C902,680 893,730 884,746" />
      </g>

      {/* manguito gris */}
      <path d="M622,543 C630,533 642,522 655,523 C660,523 665,525 670,527 L760,560 L760,600 L643,542 C636,540 628,540 622,543 Z" fill="url(#back)" stroke="#111" strokeWidth=".9" />
      <path d="M622,543 C600,552 567,605 567,640 C567,665 585,692 597,697 L770,752 L840,660 L760,578 L643,542 C636,540 628,540 622,543 Z" fill="url(#sleeve)" stroke="#111" strokeWidth="1" />
      <path d="M626,543 C603,555 571,607 571,640 C571,663 586,689 598,694" fill="none" stroke="#111" strokeWidth=".7" />
      <path d="M738,655 C733,680 731,700 738,725 C746,745 760,753 770,752 C785,752 805,735 820,710 C832,690 840,670 841,650 Z" fill="#3d3d3f" stroke="#111" strokeWidth="1" />
      <path d="M742,655 C737,680 736,702 743,722 C750,741 762,748 771,747 C785,746 803,731 817,708 C828,690 836,670 838,650" fill="none" stroke="#111" strokeWidth=".8" />
      <path d="M746,655 C741,680 741,705 748,722 C755,738 765,744 772,743 C785,742 803,728 815,708 C825,690 835,672 836,650 Z" fill="url(#gold)" stroke="#111" strokeWidth="1" />
      <path d="M747,665 L829,691" stroke="#111" strokeWidth="1" />

      {/* casquillo marrón */}
      <path d="M1000,316 L1102,349 C1060,350 1020,390 1000,440 Z" fill="url(#brownBody)" stroke="#111" strokeWidth=".8" />
      <path d="M1102,349 C1130,355 1155,410 1155,450 C1155,510 1100,607 1042,610 C1030,610 1015,600 1000,592 L1000,435 C1020,390 1060,350 1102,349 Z" fill="#33261d" stroke="#111" strokeWidth=".9" />
      <path d="M1000,425 C1025,385 1065,355 1098,355 C1125,358 1146,405 1146,448 C1142,515 1090,598 1042,601 C1030,601 1015,593 1000,582" fill="none" stroke="#111" strokeWidth=".8" />
      <path d="M1000,440 C1030,395 1065,368 1092,369 C1120,372 1140,405 1139,445 C1135,510 1085,587 1042,588 C1030,588 1015,580 1000,566 Z" fill="url(#bore)" stroke="#111" strokeWidth=".9" />
    </svg>
  );
}

export default function App() {
  return (
    <div className="relative flex h-[775px] w-[1422px] flex-col overflow-hidden bg-[#efefef] font-['Liberation_Sans',Arial,sans-serif]">
      <svg className="absolute h-0 w-0">
        <defs>
          <linearGradient id="yel" x1="0" y1="0" x2="0" y2="1">
            <stop offset="0" stopColor="#ffe93a" />
            <stop offset="1" stopColor="#f2c200" />
          </linearGradient>
          <linearGradient id="blu" x1="0" y1="0" x2="0" y2="1">
            <stop offset="0" stopColor="#b2cbea" />
            <stop offset="1" stopColor="#7fa5d8" />
          </linearGradient>
          <linearGradient id="ora" x1="0" y1="0" x2="0" y2="1">
            <stop offset="0" stopColor="#fbb888" />
            <stop offset="1" stopColor="#f59a5c" />
          </linearGradient>
          <linearGradient id="logo" x1="0" y1="0" x2="1" y2="1">
            <stop offset="0" stopColor="#d9642a" />
            <stop offset="1" stopColor="#a23e12" />
          </linearGradient>
        </defs>
      </svg>
      <div className="flex">
        <Logo />
        <div className="flex min-w-0 flex-1 flex-col">
          <TitleBar />
          <Tabs />
        </div>
      </div>
      <Ribbon />
      <div className="flex min-h-0 flex-1">
        <Browser />
        <div className="min-w-0 flex-1 bg-[#35639a]">
          <Model />
        </div>
      </div>

      <Menu />

      {/* marcas rojas sobre la captura */}
      <div className="absolute left-[43px] top-[23px] h-[22px] w-[76px] rounded-full border-[3px] border-[#e2000f]" />
      <div className="absolute left-[737px] top-[44px] h-[76px] w-[83px] rounded-[10px] border-4 border-[#e2000f]" />
      <svg className="absolute left-[965px] top-[175px] h-[50px] w-[135px]" viewBox="0 0 135 50">
        <path d="M130 5L22 35" stroke="#e2000f" strokeWidth="3.5" />
        <path d="M5 42L26 25 30 50z" fill="#e2000f" />
      </svg>
    </div>
  );
}
